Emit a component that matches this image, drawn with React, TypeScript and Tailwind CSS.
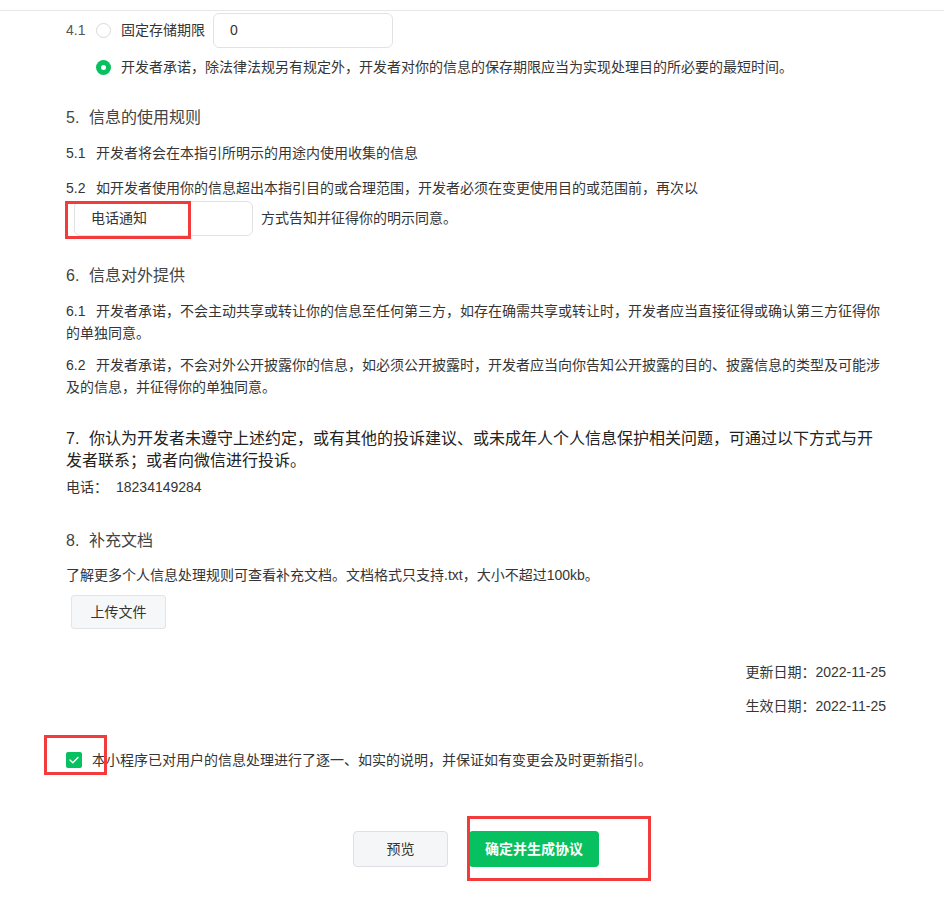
import React from "react";

// 红框标注（截图中的标记框）
function Mark({ className }: { className: string }) {
  return <div className={`absolute border-[3px] border-[#f33b3b] pointer-events-none ${className}`} />;
}

function Radio({ checked }: { checked?: boolean }) {
  if (checked) {
    return (
      <span className="w-[15px] h-[15px] rounded-full bg-[#07c160] flex items-center justify-center shrink-0">
        <span className="w-[5px] h-[5px] rounded-full bg-white" />
      </span>
    );
  }
  return <span className="w-[15px] h-[15px] rounded-full border border-[#d9d9d9] bg-white shrink-0" />;
}

export default function App() {
  return (
    <div className="relative min-h-[897px] bg-white text-[#353535] font-['Liberation_Sans','Noto_Sans_CJK_SC',sans-serif]">
      <div className="h-[11px] border-b border-[#e7e7e7]" />

      <div className="pl-[66px] w-[886px]">
        {/* ================= 4.1 存储期限 ================= */}
        <div className="mt-[2px] flex items-center h-[35px] text-[14px]">
          <span className="w-[30px] text-[#555]">4.1</span>
          <Radio />
          <span className="ml-[10px]">固定存储期限</span>
          <div className="ml-[8px] w-[180px] h-[35px] rounded-[6px] border border-[#e2e2e2] flex items-center pl-[16px]">
            0
          </div>
        </div>
        <div className="mt-[9px] flex items-center h-[20px] pl-[30px] text-[14px]">
          <Radio checked />
          <span className="ml-[10px]">开发者承诺，除法律法规另有规定外，开发者对你的信息的保存期限应当为实现处理目的所必要的最短时间。</span>
        </div>

        {/* ================= 5 ================= */}
        <h3 className="mt-[29px] text-[16px] leading-[24px] text-[#444]">
          <span className="inline-block w-[23px]">5.</span>信息的使用规则
        </h3>
        <p className="mt-[12px] text-[14px] leading-[22px]">
          <span className="inline-block w-[30px]">5.1</span>开发者将会在本指引所明示的用途内使用收集的信息
        </p>
        <p className="mt-[13px] text-[14px] leading-[22px]">
          <span className="inline-block w-[30px]">5.2</span>如开发者使用你的信息超出本指引目的或合理范围，开发者必须在变更使用目的或范围前，再次以
        </p>
        <div className="mt-[2px] flex items-center text-[14px]">
          <div className="ml-[8px] w-[179px] h-[35px] rounded-[6px] border border-[#e2e2e2] flex items-center pl-[16px]">
            电话通知
          </div>
          <span className="ml-[8px]">方式告知并征得你的明示同意。</span>
        </div>

        {/* ================= 6 ================= */}
        <h3 className="mt-[28px] text-[16px] leading-[24px] text-[#444]">
          <span className="inline-block w-[23px]">6.</span>信息对外提供
        </h3>
        <p className="mt-[12px] text-[14px] leading-[22px]">
          <span className="inline-block w-[30px]">6.1</span>开发者承诺，不会主动共享或转让你的信息至任何第三方，如存在确需共享或转让时，开发者应当直接征得或确认第三方征得你的单独同意。
        </p>
        <p className="mt-[10px] text-[14px] leading-[22px]">
          <span className="inline-block w-[30px]">6.2</span>开发者承诺，不会对外公开披露你的信息，如必须公开披露时，开发者应当向你告知公开披露的目的、披露信息的类型及可能涉及的信息，并征得你的单独同意。
        </p>

        {/* ================= 7 ================= */}
        <h3 className="mt-[30px] text-[16px] leading-[22px] text-[#222]">
          <span className="inline-block w-[23px]">7.</span>你认为开发者未遵守上述约定，或有其他的投诉建议、或未成年人个人信息保护相关问题，可通过以下方式与开发者联系；或者向微信进行投诉。
        </h3>
        <p className="mt-[4px] text-[14px] leading-[22px]">
          电话：<span className="ml-[8px]">18234149284</span>
        </p>

        {/* ================= 8 ================= */}
        <h3 className="mt-[31px] text-[16px] leading-[24px] text-[#444]">
          <span className="inline-block w-[23px]">8.</span>补充文档
        </h3>
        <p className="mt-[11px] text-[14px] leading-[22px]">
          了解更多个人信息处理规则可查看补充文档。文档格式只支持.txt，大小不超过100kb。
        </p>
        <button className="mt-[9px] ml-[5px] w-[95px] h-[34px] rounded-[3px] border border-[#e3e4e6] bg-[#f6f7f8] text-[14px] text-[#333]">
          上传文件
        </button>

        {/* 日期 */}
        <div className="mt-[32px] text-right text-[14px] leading-[22px]">更新日期：2022-11-25</div>
        <div className="mt-[12px] text-right text-[14px] leading-[22px]">生效日期：2022-11-25</div>

        {/* 确认勾选 */}
        <div className="mt-[32px] flex items-center h-[22px] text-[14px]">
          <span className="w-[16px] h-[16px] rounded-[2px] bg-[#07c160] flex items-center justify-center shrink-0">
            <svg width="10" height="8" viewBox="0 0 10 8" fill="none">
              <path d="M1 4l2.8 2.8L9 1.5" stroke="white" strokeWidth="1.4" strokeLinecap="round" strokeLinejoin="round" />
            </svg>
          </span>
          <span className="ml-[10px]">本小程序已对用户的信息处理进行了逐一、如实的说明，并保证如有变更会及时更新指引。</span>
        </div>

        {/* 按钮 */}
        <div className="mt-[60px] flex justify-center gap-[21px]">
          <button className="w-[95px] h-[36px] rounded-[4px] border border-[#dfe0e3] bg-[#f5f6f7] text-[14px] text-[#333]">
            预览
          </button>
          <button className="w-[130px] h-[36px] rounded-[4px] bg-[#07c160] text-[14px] font-bold text-white">
            确定并生成协议
          </button>
        </div>
      </div>

      {/* ================= 标注框 ================= */}
      <Mark className="left-[65px] top-[201px] w-[126px] h-[38px]" />
      <Mark className="left-[44px] top-[735px] w-[63px] h-[40px]" />
      <Mark className="left-[467px] top-[816px] w-[184px] h-[65px]" />
    </div>
  );
}
